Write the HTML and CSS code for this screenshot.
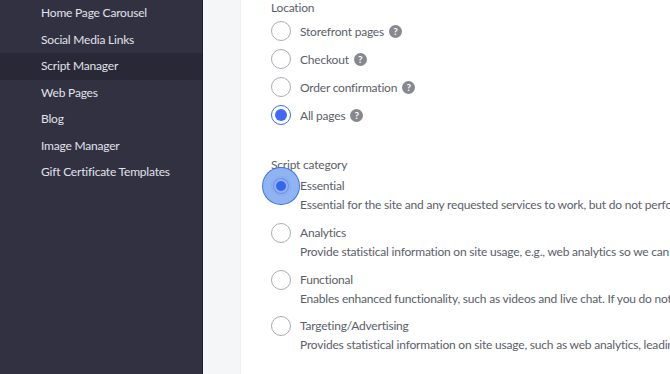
FILE: index.html
```html
<!DOCTYPE html>
<html lang="en">
<head>
    <meta charset="UTF-8">
    <meta name="viewport" content="width=device-width, initial-scale=1.0">
    <title>Script Manager</title>
    <link rel="stylesheet" href="styles.css">
</head>
<body>
    <nav class="sidebar">
        <a class="nav-item">Home Page Carousel</a>
        <a class="nav-item">Social Media Links</a>
        <a class="nav-item active">Script Manager</a>
        <a class="nav-item">Web Pages</a>
        <a class="nav-item">Blog</a>
        <a class="nav-item">Image Manager</a>
        <a class="nav-item">Gift Certificate Templates</a>
    </nav>

    <main class="page">
        <section class="card">
            <div class="field">
                <div class="field-label">Location</div>
                <label class="radio-row">
                    <span class="radio"></span>
                    <span class="radio-text">Storefront pages</span>
                    <span class="help">?</span>
                </label>
                <label class="radio-row">
                    <span class="radio"></span>
                    <span class="radio-text">Checkout</span>
                    <span class="help">?</span>
                </label>
                <label class="radio-row">
                    <span class="radio"></span>
                    <span class="radio-text">Order confirmation</span>
                    <span class="help">?</span>
                </label>
                <label class="radio-row">
                    <span class="radio checked"></span>
                    <span class="radio-text">All pages</span>
                    <span class="help">?</span>
                </label>
            </div>

            <div class="field category">
                <div class="field-label">Script category</div>
                <label class="option">
                    <span class="radio checked focused"></span>
                    <span class="option-body">
                        <span class="radio-text">Essential</span>
                        <span class="option-desc">Essential for the site and any requested services to work, but do not perform any additional or secondary function.</span>
                    </span>
                </label>
                <label class="option">
                    <span class="radio"></span>
                    <span class="option-body">
                        <span class="radio-text">Analytics</span>
                        <span class="option-desc">Provide statistical information on site usage, e.g., web analytics so we can improve this website over time.</span>
                    </span>
                </label>
                <label class="option">
                    <span class="radio"></span>
                    <span class="option-body">
                        <span class="radio-text">Functional</span>
                        <span class="option-desc">Enables enhanced functionality, such as videos and live chat. If you do not allow these, then some or all of these functions may not work properly.</span>
                    </span>
                </label>
                <label class="option">
                    <span class="radio"></span>
                    <span class="option-body">
                        <span class="radio-text">Targeting/Advertising</span>
                        <span class="option-desc">Provides statistical information on site usage, such as web analytics, leading to more relevant advertising.</span>
                    </span>
                </label>
            </div>
        </section>
    </main>
</body>
</html>
```

FILE: styles.css
```css
* {
    box-sizing: border-box;
}
body {
    margin: 0;
    height: 374px;
    overflow: hidden;
    display: flex;
    font-family: "Source Sans Pro", Lato, "Liberation Sans", sans-serif;
    font-size: 12px;
    letter-spacing: -0.2px;
    background: #f5f6f8;
}
.sidebar {
    width: 203px;
    flex-shrink: 0;
    background: #313142;
    border-right: 1px solid #1f1f2b;
    display: flex;
    flex-direction: column;
}
.nav-item {
    display: block;
    height: 26.5px;
    line-height: 26.5px;
    padding-left: 41px;
    color: #e2e2ea;
    white-space: nowrap;
}
.nav-item.active {
    background: #282837;
}
.page {
    flex: 1;
    padding-left: 37px;
    overflow: hidden;
}
.card {
    background: white;
    border-left: 1px solid #eceef2;
    height: 100%;
    padding: 0 0 0 30px;
    color: #5b5e68;
}
.field-label {
    height: 15px;
    line-height: 15px;
    margin-bottom: 2px;
}
.radio-row {
    display: flex;
    align-items: center;
    height: 28px;
    white-space: nowrap;
}
.radio {
    width: 20px;
    height: 20px;
    flex-shrink: 0;
    border-radius: 50%;
    border: 1px solid #a9acb4;
    background: white;
    margin-right: 9px;
    position: relative;
}
.radio.checked {
    border-color: #3f66ef;
}
.radio.checked::after {
    content: "";
    position: absolute;
    left: 3px;
    top: 3px;
    width: 12px;
    height: 12px;
    border-radius: 50%;
    background: #4268f0;
}
.radio.focused {
    border-color: #8aa9ee;
    box-shadow: 0 0 0 8px #8fb3f3, 0 0 0 9px #3c73d8;
    background: #8fb3f3;
}
.radio.focused::after {
    left: 4px;
    top: 4px;
    width: 10px;
    height: 10px;
    background: #3467ec;
    box-shadow: 0 0 0 2px #8fb3f3, 0 0 0 3px #6c8fe6;
}
.help {
    width: 13px;
    height: 13px;
    border-radius: 50%;
    background: #86888e;
    color: white;
    font-size: 10px;
    font-weight: bold;
    line-height: 13px;
    text-align: center;
    letter-spacing: 0;
    margin-left: 5px;
}
.category {
    margin-top: 28px;
}
.category .field-label {
    margin-bottom: 3px;
}
.option {
    display: flex;
    align-items: flex-start;
    height: 46.8px;
    white-space: nowrap;
}
.option .radio {
    margin-top: 1px;
}
.option-body {
    display: flex;
    flex-direction: column;
}
.option-body .radio-text {
    line-height: 21px;
}
.option-desc {
    line-height: 18px;
}
```
